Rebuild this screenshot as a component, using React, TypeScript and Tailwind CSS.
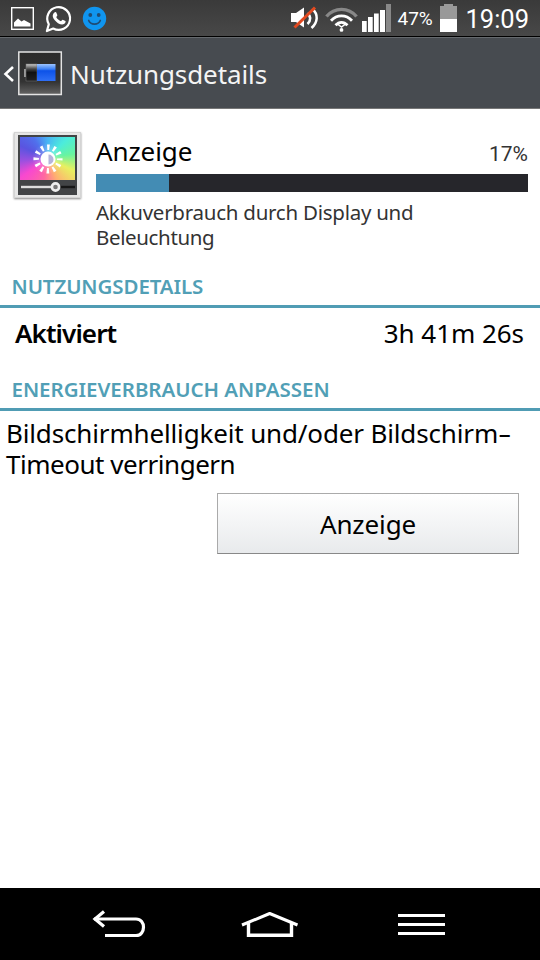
interface SectionHeaderProps {
  title: string;
  className: string;
}

const StatusBar = () => {
  return (
    <div className="flex h-[37px] items-center border-b border-black bg-linear-to-b from-[#3a3a3a] to-[#484848] text-white">
      <svg width="110" height="36" viewBox="0 0 110 36" fill="none">
        <rect x="11.7" y="7.7" width="21.6" height="21.6" stroke="#fff" strokeWidth="1.4" />
        <path d="M14 26.5V22.5L18 18.5L21.5 21.5L24 20L30.5 23.5V26.5Z" fill="#fff" />
        <path
          d="M46.9 31L48.8 24.2A11.4 11.4 0 1 1 53.2 28.5Z"
          stroke="#fff"
          strokeWidth="2.2"
          strokeLinejoin="round"
        />
        <path
          d="M54.5 12.4C55.4 11.7 56 12 56.3 12.6L57.3 15C57.4 15.6 57 16.1 56.2 17C57.2 19 59 20.4 61 21.2C61.8 20.5 62.2 19.5 62.8 19.7L65.4 21C66 21.5 65.4 23 64.4 23.8C62.5 25 60.2 24.4 58 23.2C55.6 21.8 53.6 19.3 52.9 17.1C52.4 15.2 53.2 13.3 54.5 12.4Z"
          fill="#fff"
        />
        <circle cx="94.5" cy="18.5" r="11.7" fill="#1095ef" />
        <circle cx="90.3" cy="15" r="1.9" fill="#1f4b73" />
        <circle cx="98.7" cy="15" r="1.9" fill="#1f4b73" />
        <path d="M88.7 20.5C90.5 25.3 98.5 25.3 100.3 20.5" stroke="#1f4b73" strokeWidth="1.7" strokeLinecap="round" />
      </svg>
      <svg className="ml-auto" width="107" height="36" viewBox="287 0 107 36" fill="none">
        <path d="M291 13H296L304 7.5V27.5L296 22H291Z" fill="#fff" />
        <path d="M307.5 13C311 16.5 311 20.5 307.5 24M312.5 9C318.5 14.5 318 22 311.5 28" stroke="#fff" strokeWidth="2.5" />
        <path d="M294.5 27.5L315 7.5" stroke="#e2491f" strokeWidth="3" />
        <path d="M326.5 16.5C334.5 7 348.5 7 356.5 16.5" stroke="#888" strokeWidth="3.4" />
        <path d="M331 20.8C337 14.2 346 14.2 352 20.8" stroke="#fff" strokeWidth="2.8" />
        <path d="M335.5 25.3C339.2 21.3 343.8 21.3 347.5 25.3" stroke="#fff" strokeWidth="2.8" />
        <path d="M337.5 24L341.5 27L345.5 24" stroke="#fff" strokeWidth="1.5" />
        <circle cx="341.5" cy="29.9" r="1.9" fill="#fff" />
        <path d="M362 21H366.7V32H362ZM368 17H372.7V32H368ZM374 13.5H378.7V32H374ZM380 10H385V32H380Z" fill="#fff" />
        <path d="M386 4H391V32H386Z" fill="#888" />
      </svg>
      <span className="ml-[3px] w-[38px] pt-[2px] font-[Roboto,sans-serif] text-[19px] leading-[34px] whitespace-nowrap">
        47%
      </span>
      <svg className="ml-[4px]" width="19" height="36" viewBox="0 0 19 36">
        <path d="M1 6H5V4H14V6H18V19H1Z" fill="#999" />
        <path d="M1 19H18V32H1Z" fill="#fff" />
      </svg>
      <span className="mr-[11px] ml-[7px] pt-[3px] font-[Roboto,sans-serif] text-[25.5px] leading-[33px] whitespace-nowrap">
        19:09
      </span>
    </div>
  );
};

const TitleBar = () => {
  return (
    <div className="flex h-[72px] items-center border-t border-b border-t-[#666a6e] border-b-[#777] bg-[#474b50]">
      <svg width="64" height="70" viewBox="0 38 64 70" fill="none">
        <defs>
          <linearGradient id="frame" x1="0" y1="0" x2="0" y2="1">
            <stop stopColor="#2b2b2b" />
            <stop offset=".7" stopColor="#333" />
            <stop offset="1" stopColor="#646464" />
          </linearGradient>
          <linearGradient id="cell" x1="0" y1="0" x2="0" y2="1">
            <stop stopColor="#9cc4ff" />
            <stop offset=".3" stopColor="#3c80f4" />
            <stop offset=".4" stopColor="#0d52e8" />
            <stop offset="1" stopColor="#2f6ff5" />
          </linearGradient>
          <linearGradient id="empty" x1="0" y1="0" x2="0" y2="1">
            <stop stopColor="#ccc" />
            <stop offset=".3" stopColor="#444" />
            <stop offset=".5" stopColor="#111" />
            <stop offset="1" stopColor="#222" />
          </linearGradient>
        </defs>
        <path d="M13 67L5.500 74L13 81" stroke="#fff" strokeWidth="2.6" />
        <rect x="18.8" y="52" width="42.5" height="42.5" fill="url(#frame)" stroke="#e4e4e4" strokeWidth="1.5" />
        <rect x="24" y="69" width="3" height="8" fill="#999" />
        <rect x="26" y="64" width="11" height="17" fill="url(#empty)" stroke="#777" strokeWidth=".5" />
        <rect x="37" y="64" width="18.5" height="17" fill="url(#cell)" />
      </svg>
      <h1 className="ml-[6px] pt-[2px] text-[26px] leading-9 tracking-[-0.1px] whitespace-nowrap text-[#f4f4f4]">
        Nutzungsdetails
      </h1>
    </div>
  );
};

const DisplayIcon = () => {
  return (
    <div className="relative h-[66px] w-[67px] border border-[#d4d4d4] bg-[#e6e6e6] px-[3px] pt-[2px] shadow-[0_1px_2px_#888]">
      <div className="h-[60px] w-[59px] bg-[#424446] px-[2px] pt-[2px]">
        <div className="h-[43px] w-[55px] bg-[radial-gradient(circle_at_50%_50%,#fff6_0%,#fff0_45%),conic-gradient(from_0deg_at_50%_50%,#48b4f4,#4cecdc_45deg,#68f4a0_80deg,#e8f060_115deg,#ffb070_155deg,#ff68a0_190deg,#f848d0_235deg,#9a50e0_265deg,#5a54e0_295deg,#5070ec_325deg,#48b4f4)]" />
      </div>
      <svg className="absolute top-0 left-0" width="65" height="64" viewBox="0 0 65 64" fill="none">
        <circle cx="33" cy="26" r="7.5" fill="#fff" />
        <path d="M33.5 21.5A5 5 0 0 1 33.5 31.5Z" fill="#b5b4dc" />
        <circle cx="33" cy="26" r="11.8" stroke="#fff" strokeWidth="5.5" strokeDasharray="2.4 3.779" strokeDashoffset="1.2" />
        <path d="M6 54H38" stroke="#ddd" strokeWidth="2.4" />
        <path d="M44 54H60" stroke="#171717" strokeWidth="2.4" />
        <circle cx="40.5" cy="54" r="3.6" stroke="#eee" strokeWidth="2.6" fill="#777" />
      </svg>
    </div>
  );
};

const SectionHeader: React.FC<SectionHeaderProps> = ({ title, className }) => {
  return (
    <h2 className="h-[35px] border-b-[3px] border-[#509cb4] pl-[11.500px] text-[#519fb6]">
      <span className={`block text-[20.5px] leading-[26px] font-semibold whitespace-nowrap ${className}`}>{title}</span>
    </h2>
  );
};

const NavBar = () => {
  return (
    <div className="flex h-[72px] items-center justify-between bg-black pr-[95px] pl-[92px]">
      <svg width="54" height="30" viewBox="92 909 54 30" fill="none" stroke="#fff" strokeWidth="3.2">
        <path d="M94 919H136C146 919 146 935.5 136 935.5H105" />
        <path d="M104 911.5L95 919L104 926.5" />
      </svg>
      <svg className="-ml-[5px]" width="58" height="30" viewBox="241 909 58 30" fill="none" stroke="#fff" strokeWidth="3">
        <path d="M242 925L269.7 913.5L297.5 925" strokeLinejoin="round" />
        <path d="M248.5 923V935.3H291.5V923" strokeWidth="3.4" />
      </svg>
      <svg width="47" height="30" viewBox="398 909 47 30" stroke="#fff" strokeWidth="2.8">
        <path d="M398 915.5H445M398 924.5H445M398 933.5H445" />
      </svg>
    </div>
  );
};

const App = () => {
  return (
    <div className="flex h-[960px] w-[540px] flex-col overflow-hidden bg-white font-['Noto_Sans',sans-serif] text-black">
      <StatusBar />
      <TitleBar />
      <main className="flex-1">
        <div className="flex h-[164px] pt-[23px] pr-3 pl-[14px]">
          <DisplayIcon />
          <div className="ml-[15px] flex-1">
            <div className="flex h-9 items-baseline justify-between leading-[38px]">
              <span className="text-[26px] tracking-[-0.1px]">Anzeige</span>
              <span className="font-[Roboto,sans-serif] text-[21px] text-[#333]">17%</span>
            </div>
            <div className="mt-[6px] h-[18px] bg-[#26262b]">
              <div className="h-full w-[73px] bg-[#438cb4]" />
            </div>
            <p className="mt-2 text-[20.5px] leading-[24.5px] whitespace-nowrap text-[#333]">
              <span className="block tracking-[-0.25px]">Akkuverbrauch durch Display und</span>
              <span className="block tracking-[-0.36px]">Beleuchtung</span>
            </p>
          </div>
        </div>
        <SectionHeader title="NUTZUNGSDETAILS" className="tracking-[-0.1px]" />
        <div className="flex h-[51px] justify-between pr-4 pl-[15px] text-[26px] leading-[51px] whitespace-nowrap">
          <span className="font-semibold tracking-[-0.9px]">Aktiviert</span>
          <span className="tracking-[-0.05px]">3h 41m 26s</span>
        </div>
        <div className="mt-[17px]">
          <SectionHeader title="ENERGIEVERBRAUCH ANPASSEN" className="tracking-[-0.04px]" />
        </div>
        <p className="mt-[7px] pl-[6px] text-[26px] leading-[31px] whitespace-nowrap">
          <span className="block tracking-[-0.15px]">
            Bildschirmhelligkeit und/oder Bildschirm<span className="inline-block origin-left scale-x-160">-</span>
          </span>
          <span className="block tracking-[-0.47px]">Timeout verringern</span>
        </p>
        <button className="mt-[13px] ml-[217px] block h-[61px] w-[302px] border border-[#aaa] border-b-[#888] bg-linear-to-b from-white to-[#e8eaec] pt-[2px] text-[26px] tracking-[-0.1px]">
          Anzeige
        </button>
      </main>
      <NavBar />
    </div>
  );
};

export default App;
